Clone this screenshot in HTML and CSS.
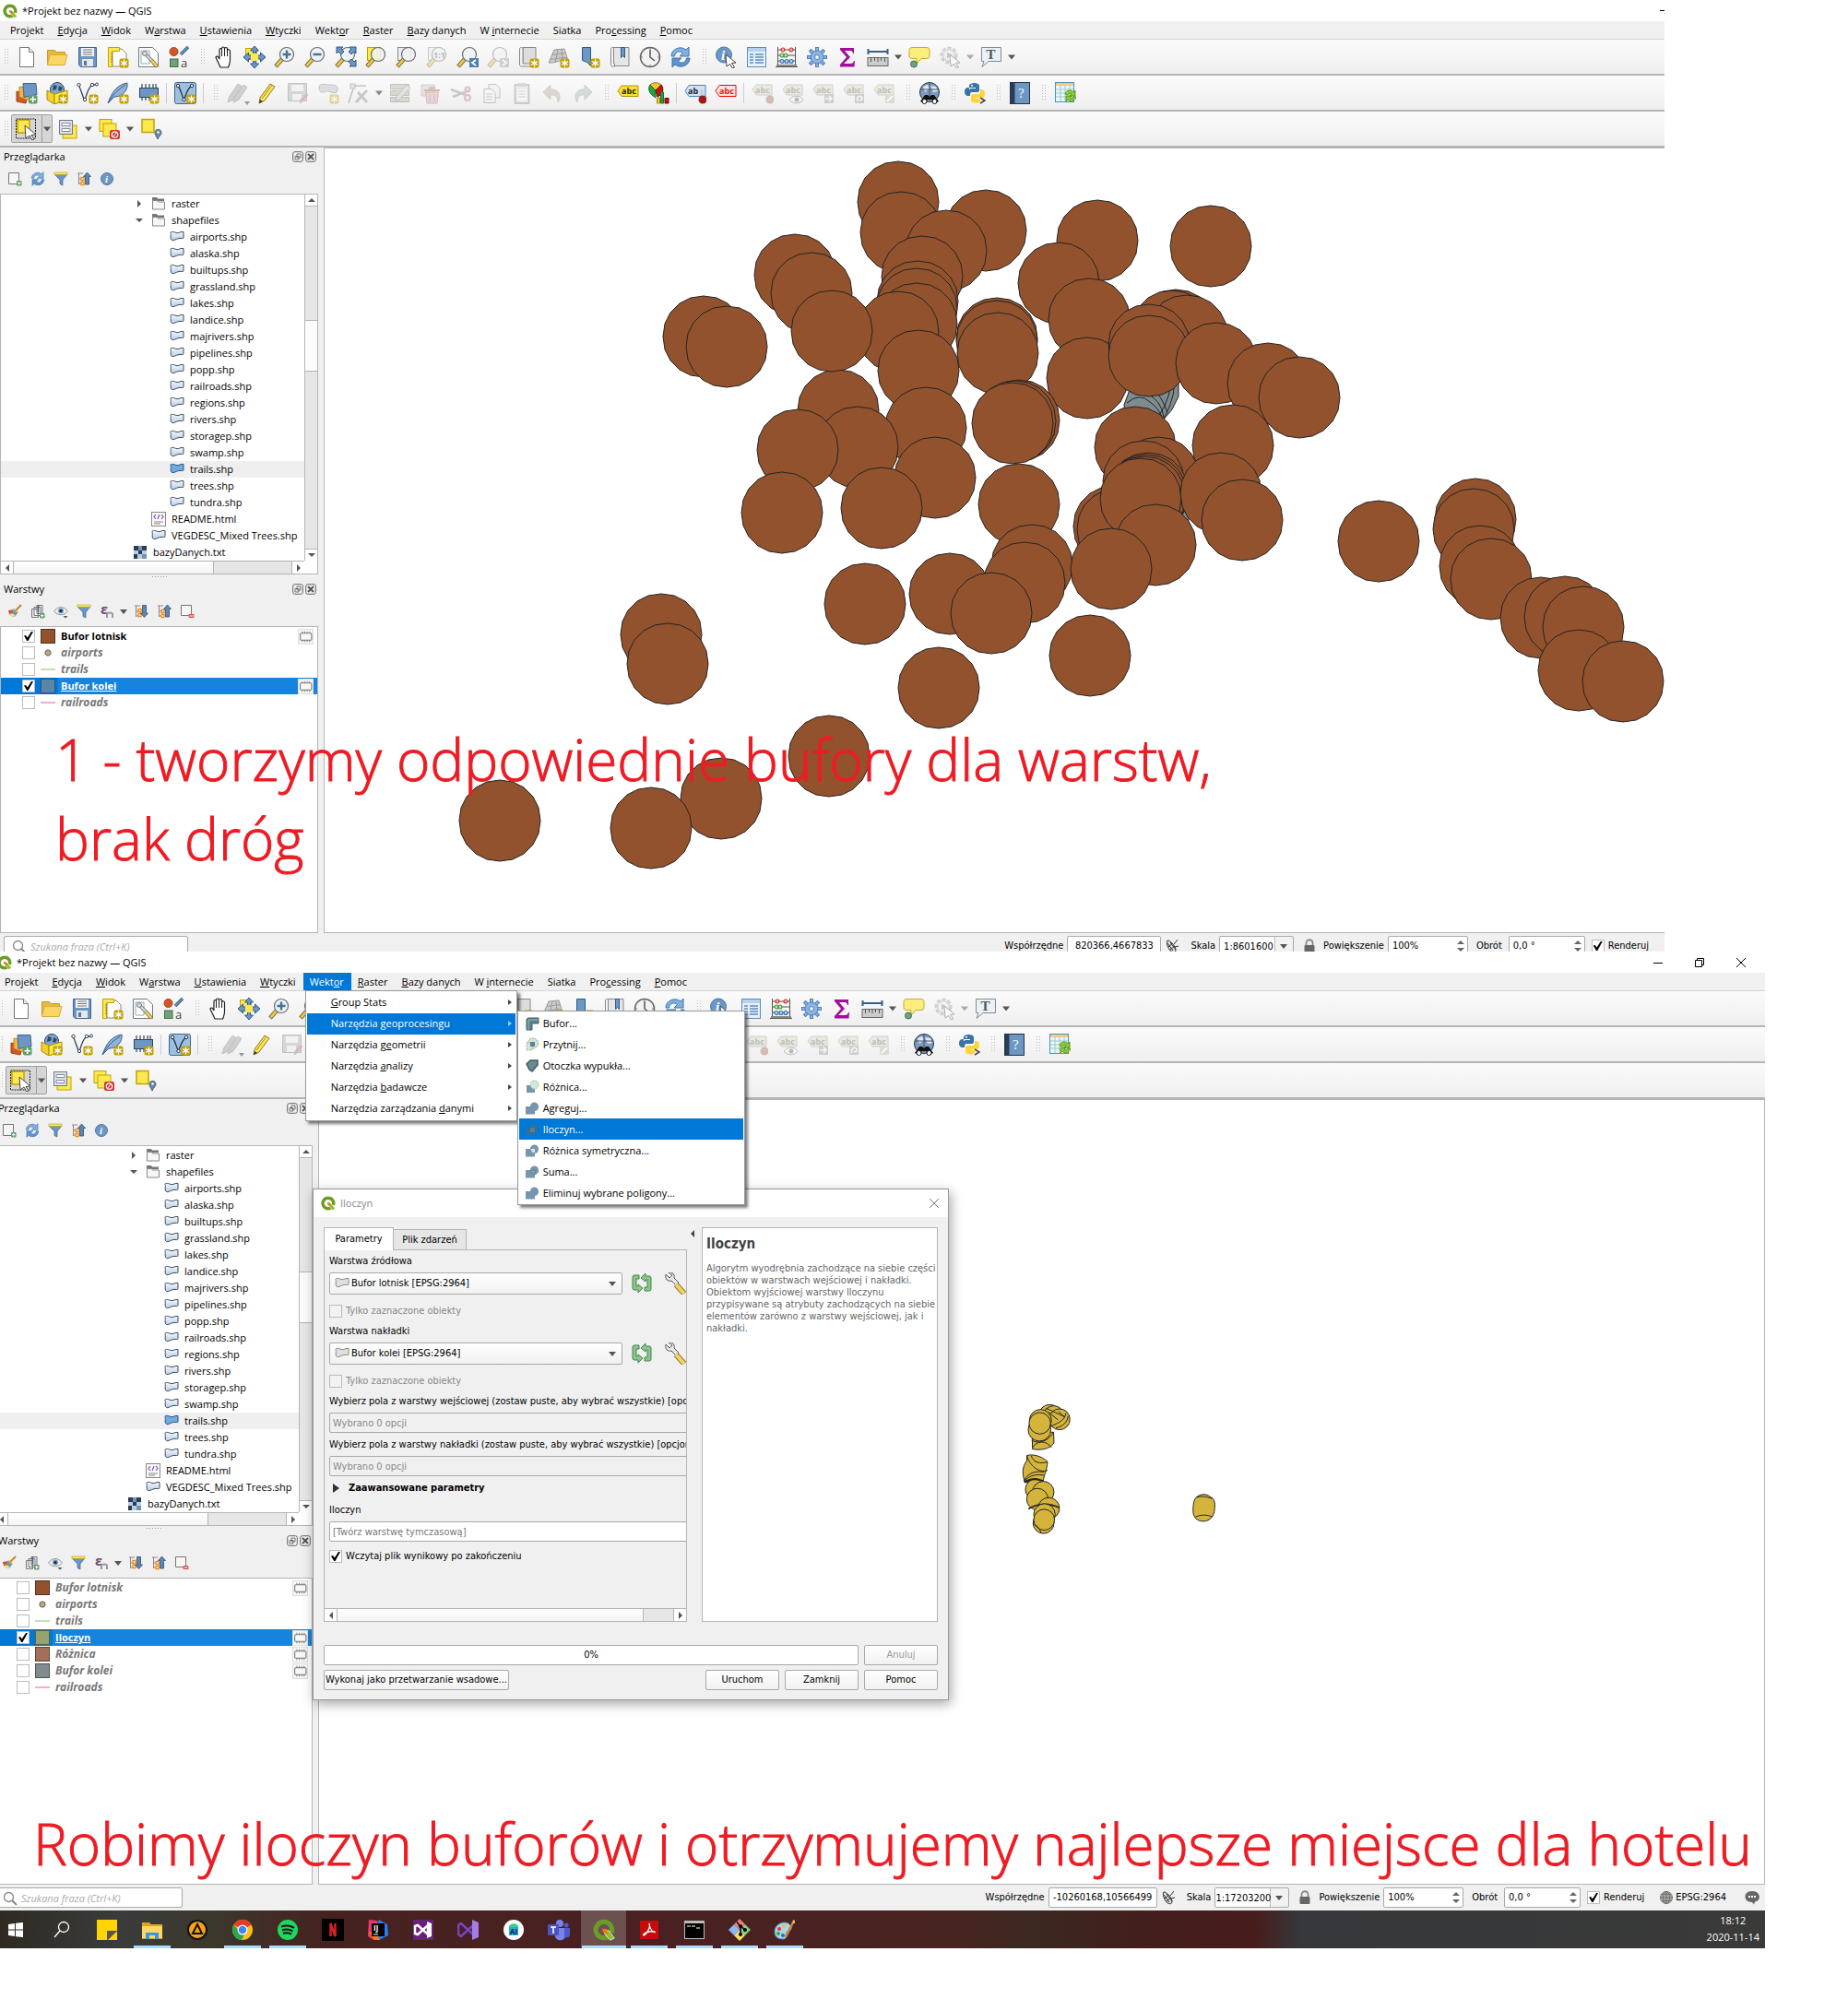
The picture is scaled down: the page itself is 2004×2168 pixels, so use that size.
FILE: index.html
```html
<!DOCTYPE html>
<html lang="pl">
<head>
<meta charset="utf-8">
<title>Projekt bez nazwy — QGIS</title>
<link rel="stylesheet" href="styles.css">
</head>
<body>
<svg class="sprite" aria-hidden="true">
  <linearGradient id="gBlue" x1="0" y1="0" x2="0" y2="1"><stop offset="0" stop-color="#f4f8fc"/><stop offset="1" stop-color="#b9cde4"/></linearGradient>
  <symbol id="badge" viewBox="0 0 24 24"><rect x="13.500" y="13.500" width="10" height="10" rx="2" fill="#c4a000"/><circle cx="18.500" cy="18.500" r="2" fill="#fff"/><path d="M18.500 14.500v8M15 16.500l7 4M22 16.500l-7 4" stroke="#fff" stroke-width="1.200"/></symbol>
  <symbol id="mag" viewBox="0 0 24 24"><path d="M2 22l7-8" stroke="#555" stroke-width="4.500"/><path d="M2.500 21.500l6.500-7.500" stroke="#f3c63a" stroke-width="2.800"/><circle cx="14" cy="9" r="7.500" fill="#eef2f6" fill-opacity=".85" stroke="#6b6b6b" stroke-width="1.200"/></symbol>
  <symbol id="new" viewBox="0 0 24 24"><path d="M4.500 1.500h10l5 5v16h-15z" fill="#fff" stroke="#777"/><path d="M14.500 1.500v5h5" fill="#eee" stroke="#777"/></symbol>
  <symbol id="open" viewBox="0 0 24 24"><path d="M1.500 4.500h8l2 2h9v13h-19z" fill="#e8b93c" stroke="#c79a2a"/><path d="M4 9.500h19l-3 11H1.500z" fill="#fcd665" stroke="#d9ab3b"/></symbol>
  <symbol id="save" viewBox="0 0 24 24"><path d="M2.500 1.500h19v21h-17l-2-2z" fill="#6c97c4" stroke="#41648c"/><rect x="5" y="2" width="14" height="9" fill="#f4f4f4"/><path d="M7 4h10M7 6.500h10M7 9h10" stroke="#777"/><rect x="6" y="14" width="12" height="8" fill="#e8e8e8"/><rect x="8" y="16" width="3" height="5" fill="#5779a0"/></symbol>
  <symbol id="layout" viewBox="0 0 24 24"><path d="M6 3h10l5 5v14H6z" fill="#fff" stroke="#888"/><path d="M1.500 1.500h12v4h-8v17h-4z" fill="#fce94f" stroke="#c4a000"/><path d="M4 8h2M4 11h2M4 14h2M4 17h2" stroke="#a08000"/><use href="#badge"/></symbol>
  <symbol id="layouts" viewBox="0 0 24 24"><path d="M1.500 1.500h15l6 6v15h-21z" fill="#fff" stroke="#777"/><path d="M4 5h9v14H4z" fill="none" stroke="#8ab"/><path d="M8 8l9 9" stroke="#666" stroke-width="3.500"/><path d="M8 8l8 8" stroke="#ddd" stroke-width="2"/><path d="M15 15l6 7" stroke="#7a6418" stroke-width="4"/><path d="M15 15l6 7" stroke="#f3d46a" stroke-width="2.500"/><circle cx="8" cy="8" r="2.500" fill="#ddd" stroke="#777"/></symbol>
  <symbol id="style" viewBox="0 0 24 24"><circle cx="6.500" cy="6" r="4.500" fill="#d4552a" stroke="#a33e1b"/><path d="M14 9l8-8" stroke="#41648c" stroke-width="3.500"/><path d="M14 9l8-8" stroke="#6c97c4" stroke-width="1.500"/><rect x="2.500" y="14" width="8.500" height="8.500" fill="#6fa27b" stroke="#456f50"/><text x="14" y="23" font-size="13" fill="#444">a</text></symbol>
  <symbol id="pan" viewBox="0 0 24 24"><path d="M8 23C6 18 4 15 3 12c1-2 3-.500 4 2V4c0-2 2.500-2 2.500 0V2.500c0-2 3-2 3 0V3c0-2 3-2 3 0v2c0-2 3-1.500 3 .500V15c0 4-1 5-2 8z" fill="#fff" stroke="#222" stroke-width="1.200"/><path d="M9.500 4v7M12.500 3v8M15.500 4v7" stroke="#222"/></symbol>
  <symbol id="pansel" viewBox="0 0 24 24"><rect x="2.500" y="2.500" width="12" height="12" fill="#fce94f" stroke="#c4a000"/><path d="M12 0l4.500 5h-3v5h5v-3L24 12l-5.500 5v-3h-5v5h3L12 24l-4.500-5h3v-5h-5v3L0 12l5.500-5v3h5V5h-3z" fill="#6c97c4" stroke="#2f5a87"/><rect x="8" y="8" width="8" height="8" fill="#fce94f"/></symbol>
  <symbol id="zin" viewBox="0 0 24 24"><use href="#mag"/><path d="M14 4.500v9M9.500 9h9" stroke="#41739f" stroke-width="2.500"/></symbol>
  <symbol id="zout" viewBox="0 0 24 24"><use href="#mag"/><path d="M9.500 9h9" stroke="#41739f" stroke-width="2.500"/></symbol>
  <symbol id="zfull" viewBox="0 0 24 24"><use href="#mag"/><path d="M2 1h7l-2 2 3 3-3 3-3-3-2 2zM23 1v7l-2-2-3 3-3-3 3-3-2-2zM23 22h-7l2-2-3-3 3-3 3 3 2-2z" fill="#6c97c4" stroke="#2f5a87"/></symbol>
  <symbol id="zsel" viewBox="0 0 24 24"><rect x="2.500" y="1.500" width="14" height="14" fill="#fce94f" stroke="#c4a000"/><use href="#mag"/></symbol>
  <symbol id="zlay" viewBox="0 0 24 24"><rect x="2.500" y="1.500" width="14" height="14" fill="#eee" stroke="#888"/><use href="#mag"/></symbol>
  <symbol id="znat" viewBox="0 0 24 24"><rect x="2.500" y="1.500" width="14" height="14" fill="#eee" stroke="#888"/><use href="#mag"/><text x="8" y="12.500" font-size="9" font-weight="bold" fill="#555">1:1</text></symbol>
  <symbol id="zprev" viewBox="0 0 24 24"><use href="#mag"/><rect x="14" y="13" width="10" height="10" fill="#4d7fb3"/><path d="M21 15l-4 3 4 3" fill="none" stroke="#fff" stroke-width="1.800"/></symbol>
  <symbol id="znext" viewBox="0 0 24 24"><use href="#mag"/><rect x="14" y="13" width="10" height="10" fill="#999"/><path d="M17 15l4 3-4 3" fill="none" stroke="#fff" stroke-width="1.800"/></symbol>
  <symbol id="mapview" viewBox="0 0 24 24"><path d="M6 1.500h14v18H6z" fill="#ddd" stroke="#888"/><path d="M2.500 3c0-2 3.500-2 3.500 0v16h13v3H4.500c-1 0-2-1-2-2z" fill="#f3f3f3" stroke="#888"/><use href="#badge"/></symbol>
  <symbol id="map3d" viewBox="0 0 24 24"><path d="M7 4l11-1 4 13c-7-3-13 3-21 2z" fill="#ccc" stroke="#999"/><path d="M5 9c5 1 10-2 15-1M3 14c6 1 12-3 18-1M11 4L8 18M15 4l1 11" stroke="#999" fill="none"/><use href="#badge"/></symbol>
  <symbol id="bmnew" viewBox="0 0 24 24"><path d="M4.500 1.500h9v20l-4-4-5 -2z" fill="#6c97c4" stroke="#2f5a87"/><use href="#badge"/></symbol>
  <symbol id="bm" viewBox="0 0 24 24"><path d="M5 1.500h17v20H5z" fill="#e6e6e6" stroke="#888"/><path d="M2.500 3c0-2 3-2 3 0v16h1v3H4c-1 0-1.500-1-1.500-2z" fill="#f6f6f6" stroke="#888"/><path d="M13.500 1.500h4v11l-2-2-2 2z" fill="#6c97c4" stroke="#2f5a87"/></symbol>
  <symbol id="clock" viewBox="0 0 24 24"><circle cx="12" cy="12" r="10.500" fill="#f2f2f2" stroke="#666" stroke-width="1.500"/><path d="M12 4v8l5 4" fill="none" stroke="#555" stroke-width="1.500"/><path d="M12 2v2M12 20v2M2 12h2M20 12h2" stroke="#777"/></symbol>
  <symbol id="refresh" viewBox="0 0 24 24"><path d="M2 11C2 3 12-1 18 4l3-3v10H11l3.500-3.500C10 4 6 7 5.500 11z" fill="#7fb0e0" stroke="#3f74ad"/><path d="M22 13c0 8-10 12-16 7l-3 3V13h10l-3.500 3.500C14 20 18 17 18.500 13z" fill="#5d94cf" stroke="#3f74ad"/></symbol>
  <symbol id="cursor" viewBox="0 0 24 24"><path d="M12 9l11 9-4.500.500 3 4.500-2 1-3-4.500L13 22z" fill="#fff" stroke="#444"/></symbol>
  <symbol id="ident" viewBox="0 0 24 24"><circle cx="10" cy="9.500" r="8.500" fill="#6c97c4" stroke="#4a78a8"/><text x="7" y="15" font-size="15" font-style="italic" font-weight="bold" font-family="Liberation Serif,serif" fill="#fff">i</text><use href="#cursor"/></symbol>
  <symbol id="table" viewBox="0 0 24 24"><rect x="2.500" y="1.500" width="20" height="21" fill="#e6f1fb" stroke="#5d8cba"/><rect x="3" y="2" width="19" height="4" fill="#b5d3ee"/><path d="M5 9h4M5 12h4M5 15h4M5 18h4M11 9h9M11 12h9M11 15h9M11 18h9" stroke="#5d8cba" stroke-width="1.300"/></symbol>
  <symbol id="abacus" viewBox="0 0 24 24"><path d="M2.500 1v20M21.500 1v20M0 22.500h24M2 4h20M2 10h20M2 16h20" stroke="#555" fill="none"/><path d="M1 21h22" stroke="#888" stroke-width="2"/><g stroke-width="1.200"><g fill="#f6b3b3" stroke="#c33"><circle cx="8" cy="4" r="2"/><circle cx="17" cy="4" r="2"/></g><g fill="#b9e5b0" stroke="#4a9a3f"><circle cx="7" cy="10" r="2"/><circle cx="11" cy="10" r="2"/></g><g fill="#b5d3ee" stroke="#3f74ad"><circle cx="7" cy="16.500" r="2"/><circle cx="12" cy="16.500" r="2"/><circle cx="17" cy="16.500" r="2"/></g></g></symbol>
  <symbol id="gear" viewBox="0 0 24 24"><path d="M12 1v22M1 12h22M4.200 4.200l15.600 15.600M19.800 4.200L4.200 19.800" stroke="#4d80bd" stroke-width="4"/><path d="M12 2v20M2 12h20M5 5l14 14M19 5L5 19" stroke="#8db4e2" stroke-width="2"/><circle cx="12" cy="12" r="7" fill="#8db4e2" stroke="#4d80bd"/><circle cx="12" cy="12" r="2.500" fill="#f4f4f4" stroke="#4d80bd"/></symbol>
  <symbol id="sigma" viewBox="0 0 24 24"><path d="M4 2h15v6h-1c-.500-2.500-1.500-3-4-3H9l6 7-7 7h7c2.500 0 3.500-1 4-3h1l-.500 6.500H4V20l7-8-7-8z" fill="#a0109b"/></symbol>
  <symbol id="ruler" viewBox="0 0 24 24"><path d="M1 6h22M1.500 3v6M22.500 3v6" stroke="#3b5f86" stroke-width="2"/><rect x="1" y="12.500" width="22" height="9" fill="#ccc" stroke="#666"/><path d="M4.500 13v4M8.500 13v3M12 13v4M15.500 13v3M19.500 13v4" stroke="#555"/></symbol>
  <symbol id="tip" viewBox="0 0 24 24"><path d="M5 1.500h14c3 0 4 1 4 3v6c0 2-1 3-4 3h-5L9 19v-5.500H5c-3 0-4-1-4-3v-6c0-2 1-3 4-3z" fill="#fcee7c" stroke="#c4a83a"/><circle cx="6" cy="19.500" r="3.500" fill="#6fa27b" stroke="#456f50"/></symbol>
  <symbol id="action" viewBox="0 0 24 24"><circle cx="11" cy="10" r="8" fill="#ddd" stroke="#999" stroke-width="3" stroke-dasharray="4 2"/><circle cx="11" cy="10" r="6" fill="#eee" stroke="#999"/><path d="M9 6.500v7l6-3.500z" fill="#888"/><use href="#cursor"/></symbol>
  <symbol id="textann" viewBox="0 0 24 24"><path d="M1.500 1.500h21v15H9l-7 6 2-6H1.500z" fill="#e9f2f6" stroke="#889"/><text x="6.500" y="14" font-size="15" font-family="Liberation Serif,serif" font-weight="bold" fill="#555">T</text></symbol>
  <symbol id="dsm" viewBox="0 0 24 24"><path d="M1 10l12 3-2 10-10-2z" fill="#d4552a" stroke="#a33e1b"/><path d="M4 5l12 2-2 13-10-4z" fill="#f3b53a" stroke="#c48a1b"/><path d="M8 1.500l14 0 1 12-14 3z" fill="#6c97c4" stroke="#41648c"/><rect x="14" y="14" width="9.500" height="9.500" rx="2" fill="#5e9e6e"/><path d="M18.700 15.500v6.500M15.500 18.700H22" stroke="#fff" stroke-width="1.600"/></symbol>
  <symbol id="geopkg" viewBox="0 0 24 24"><circle cx="12" cy="8" r="7.500" fill="#7ea8d4" stroke="#345"/><path d="M8 3l4 1-1 4-4 1zM14 4l4 2-2 4-3-1z" fill="#2c4a6c"/><path d="M1 9l8 4v11l-8-5z" fill="#f3d12a" stroke="#a88a10"/><path d="M9 13l14-4v10L9 24z" fill="#fcea3f" stroke="#a88a10"/><use href="#badge"/></symbol>
  <symbol id="shp" viewBox="0 0 24 24"><path d="M2 3c3 5 4 12 7 17 2-7 3-13 8-17h4" fill="none" stroke="#345" stroke-width="1.300"/><g fill="#fff" stroke="#345"><circle cx="2.500" cy="3" r="1.700"/><circle cx="9" cy="19" r="1.700"/><circle cx="17" cy="3" r="1.700"/><circle cx="22" cy="2.500" r="1.500"/></g><use href="#badge"/></symbol>
  <symbol id="feather" viewBox="0 0 24 24"><path d="M1 23C5 12 10 3 22 1c1 7-4 15-14 15z" fill="#8fb4da" stroke="#3b5f86"/><path d="M1 23C6 14 12 8 20 3" fill="none" stroke="#3b5f86"/><use href="#badge"/></symbol>
  <symbol id="chip" viewBox="0 0 24 24"><path d="M5 2v18M9 2v18M13 2v18M17 2v18M20 2v18" stroke="#345" stroke-width="1.200"/><rect x="2.500" y="6.500" width="20" height="10" fill="#6c97c4" stroke="#345"/><use href="#badge"/></symbol>
  <symbol id="virt" viewBox="0 0 24 24"><rect x=".500" y=".500" width="23" height="23" rx="2" fill="#9dbfe0" stroke="#41648c"/><path d="M4 4c3 4 4 10 6.500 15C13 13 14 7 19 4" fill="none" stroke="#234" stroke-width="1.300"/><g fill="#fff" stroke="#234"><circle cx="4" cy="4" r="1.700"/><circle cx="10.500" cy="19" r="1.700"/><circle cx="19" cy="4" r="1.700"/></g><use href="#badge"/></symbol>
  <symbol id="pencil" viewBox="0 0 24 24"><path d="M3 23l1-6L15 2l5 3L9 20z" fill="#f7e356" stroke="#8d7d2a"/><path d="M3 23l1-4 3 2z" fill="#333"/><path d="M6 18L17 3" stroke="#a8942a"/></symbol>
  <symbol id="pencils" viewBox="0 0 24 24"><path d="M2 22l1.500-6L13 2l4 2.500L8 19zM8 22l1.500-6L19 3l4 2.500L14 19z" fill="#999" stroke="#777"/></symbol>
  <symbol id="saveed" viewBox="0 0 24 24"><path d="M1.500 1.500h20v19h-20z" fill="#aaa" stroke="#777"/><rect x="5" y="3" width="13" height="7" fill="#eee"/><rect x="6" y="13" width="10" height="7" fill="#eee"/><path d="M14 23l1-4 6-7 2 2-6 7z" fill="#b58" stroke="#888"/></symbol>
  <symbol id="addf" viewBox="0 0 24 24"><path d="M2 6c0-6 8-3 12-3s9 0 8 6-9 0-12 1-8 3-8-4z" fill="#bbb" stroke="#777"/><use href="#badge"/></symbol>
  <symbol id="vertex" viewBox="0 0 24 24"><path d="M1 23C4 14 5 9 7 5M4 4h16" stroke="#777" fill="none" stroke-width="1.500"/><rect x="3" y="2" width="5" height="5" fill="#ccc" stroke="#777"/><path d="M11 11l10 11M21 9L9 22" stroke="#888" stroke-width="3"/></symbol>
  <symbol id="modattr" viewBox="0 0 24 24"><path d="M1.500 2.500h20v5h-20zM1.500 9.500h20v5h-20zM1.500 16.500h20v5h-20z" fill="#aab98a" stroke="#777"/><path d="M7 21l1-5L19 3l4 3-12 13z" fill="#ccc" stroke="#777"/></symbol>
  <symbol id="trash" viewBox="0 0 24 24"><path d="M2 3h14v12H2z" fill="#ccb" stroke="#999"/><path d="M5 9h17M10 6.500h7" stroke="#a55" stroke-width="2"/><path d="M6.500 11h14l-1.500 12h-11z" fill="#d9a9a9" stroke="#a66"/><path d="M11 13v8M16 13v8" stroke="#a66"/></symbol>
  <symbol id="cut" viewBox="0 0 24 24"><path d="M1 8l16 6M3 16l18-7" stroke="#888" stroke-width="2.500"/><circle cx="19" cy="17" r="3" fill="none" stroke="#b77" stroke-width="2"/><circle cx="19" cy="8" r="2.500" fill="none" stroke="#b77" stroke-width="2"/></symbol>
  <symbol id="copy" viewBox="0 0 24 24"><path d="M9 2.500h8l4 4V17H9z" fill="#eee" stroke="#777"/><path d="M4 7.500h8l4 4v11H4z" fill="#f6f6f6" stroke="#777"/><path d="M6 13h7M6 16h7M6 19h7" stroke="#888"/></symbol>
  <symbol id="paste" viewBox="0 0 24 24"><rect x="4.500" y="3" width="15" height="20" fill="#ddd" stroke="#777" stroke-width="1.500"/><rect x="8" y="1" width="8" height="4" fill="#aaa"/><path d="M7 8h10v12H7z" fill="#fff"/><path d="M8 10h8M8 13h8M8 16h8" stroke="#999"/></symbol>
  <symbol id="undo" viewBox="0 0 24 24"><path d="M10 3v5c8-1 13 6 8 14 0-6-3-9-8-8v5L2 11z" fill="#b9a79a" stroke="#998"/></symbol>
  <symbol id="redo" viewBox="0 0 24 24"><path d="M14 3v5C6 7 1 14 6 22c0-6 3-9 8-8v5l8-8z" fill="#aab5aa" stroke="#899"/></symbol>
  <symbol id="abcy" viewBox="0 0 24 24"><path d="M1 9.500l4-5.500h18v11.500H5z" fill="#fce02f" stroke="#b8900c"/><text x="5" y="13" font-size="9" font-weight="bold" fill="#222">abc</text></symbol>
  <symbol id="pie" viewBox="0 0 24 24"><path d="M9 9L3 3c3-3 9-3 12 0z" fill="#f7c81c" stroke="#865"/><path d="M9 9L3 3C0 7 2 13 9 17z" fill="#1fa636" stroke="#264"/><path d="M9 9l6-6c4 5 1 11-4 13z" fill="#c0170f" stroke="#600"/><path d="M10.500 17h3v6h-3z" fill="#f7c81c" stroke="#a80"/><path d="M14.500 11h3v12h-3z" fill="#1fa636" stroke="#264"/><path d="M19 17.500h4V23h-4z" fill="#c0170f" stroke="#600"/></symbol>
  <symbol id="abcb" viewBox="0 0 24 24"><path d="M1 9.500l4-6h18v12H5z" fill="#cfe2f7" stroke="#3f86d0"/><text x="4" y="13" font-size="9" font-weight="bold" fill="#222">ab</text><path d="M19 8v9" stroke="#ccc" stroke-width="3"/><circle cx="20" cy="19" r="4.500" fill="#a01818"/></symbol>
  <symbol id="abcr" viewBox="0 0 24 24"><path d="M1 9.500l4-6h18v12H5z" fill="#fde3e3" stroke="#f00"/><text x="5" y="13" font-size="9" font-weight="bold" fill="#e11">abc</text></symbol>
  <symbol id="lab1" viewBox="0 0 24 24"><path d="M1 8l4-5h17v11H5z" fill="#ddd9b8" stroke="#999"/><text x="4" y="12" font-size="9" font-weight="bold" fill="#666">abc</text></symbol>
  <symbol id="lpin" viewBox="0 0 24 24"><use href="#lab1"/><circle cx="20" cy="19" r="4.500" fill="#a66"/></symbol>
  <symbol id="leye" viewBox="0 0 24 24"><use href="#lab1"/><path d="M8 19c4-5 12-5 15 0-3 5-11 5-15 0z" fill="#fff" stroke="#666"/><circle cx="16" cy="19" r="2.500" fill="#666"/></symbol>
  <symbol id="lmove" viewBox="0 0 24 24"><use href="#lab1"/><rect x="13" y="13" width="10" height="10" fill="#999"/><path d="M14 18h6M18 15l3 3-3 3" stroke="#fff" fill="none" stroke-width="1.500"/></symbol>
  <symbol id="lrot" viewBox="0 0 24 24"><use href="#lab1"/><rect x="13" y="13" width="10" height="10" fill="#999"/><path d="M16 21c-2-6 5-8 5-3 0 2-2 2-3 1" stroke="#fff" fill="none" stroke-width="1.500"/></symbol>
  <symbol id="ledit" viewBox="0 0 24 24"><use href="#lab1"/><rect x="13" y="13" width="10" height="10" fill="#bba"/><path d="M15 21l6-6" stroke="#fff" stroke-width="2"/></symbol>
  <symbol id="globe" viewBox="0 0 24 24"><circle cx="12" cy="11" r="10.500" fill="#7d9cc0" stroke="#234"/><path d="M5 5l5-2 2 4-5 4zM13 4l6 1 2 5-5 1z" fill="#dfe8f2"/><path d="M12 1v19M2 8h20" stroke="#456"/><path d="M7 14h3l2 2 2-2h3l5 7-4 2-4-4h-4l-4 4-4-2z" fill="#111"/><circle cx="6.500" cy="21" r="2.500" fill="#fff" stroke="#111"/><circle cx="17.500" cy="21" r="2.500" fill="#fff" stroke="#111"/></symbol>
  <symbol id="python" viewBox="0 0 24 24"><path d="M6 12V9c0-1 1-2 2-2h5V6H6V4c0-4 11-4 11 0v5c0 1-1 2-2 2H9c-2 0-2 2-2 4H4c-4 0-4-9 0-9h2" fill="#3775a9"/><circle cx="9" cy="3.800" r="1" fill="#fff"/><path d="M18 8h2c4 0 4 9 0 9h-7v1h5v2c0 4-10 3-10 0v-5c0-1 1-2 2-2h6c2 0 2-2 2-5z" fill="#ffd43b"/><path d="M18 17l5 3-5 3" fill="none" stroke="#444" stroke-width="1.500"/></symbol>
  <symbol id="help" viewBox="0 0 24 24"><rect x="1.500" y=".500" width="21" height="23" fill="#6c97c4" stroke="#234"/><rect x="1.500" y=".500" width="5" height="23" fill="#2b3d52"/><text x="10" y="17" font-size="15" font-family="Liberation Serif,serif" fill="#fff">?</text></symbol>
  <symbol id="plug" viewBox="0 0 24 24"><rect x="1.500" y=".500" width="20" height="21" fill="#eaf5fb" stroke="#4b93b8"/><path d="M2 2.500h19" stroke="#f2c98a" stroke-width="3"/><path d="M2 8h19M2 12h19M2 16h19M7 4v17M12 4v17M17 4v17" stroke="#9cc"/><path d="M12 13c1-5 7-5 9-2l2-2v6h-6l2-2c-1-1-3-1-4 1zM24 16c-1 5-7 6-9 3l-2 2v-6h6l-2 2c1 1 3 1 4-1z" fill="#8ccc2c" stroke="#4a8a08" stroke-width=".800"/></symbol>
  <symbol id="select" viewBox="0 0 24 24"><rect x="2" y="2" width="13" height="14" fill="#fce94f" stroke="#c4a000" stroke-width="1.500"/><rect x=".500" y="1" width="21" height="21" fill="none" stroke="#222" stroke-dasharray="2 1"/><path d="M10 8l12 10-5 .500 3 4.500-2 1-3-5-4 3z" fill="#fff" stroke="#444"/></symbol>
  <symbol id="selform" viewBox="0 0 24 24"><rect x="6" y="8" width="15" height="14" fill="#fce94f" stroke="#c4a000"/><rect x="2.500" y="2.500" width="14" height="15" fill="#dde3ea" stroke="#778"/><path d="M5 5.500h9v3H5zM5 11.500h9v3H5z" fill="#fff" stroke="#889"/></symbol>
  <symbol id="desel" viewBox="0 0 24 24"><rect x="1" y="1.500" width="13" height="13" fill="#fce94f" stroke="#c4a000"/><rect x="5" y="6" width="14" height="14" fill="#fce94f" stroke="#c4a000"/><rect x="12" y="13" width="11" height="10" rx="2" fill="#d93636"/><circle cx="17.500" cy="18" r="3.200" fill="none" stroke="#fff" stroke-width="1.200"/><path d="M15.500 20.500l4-5" stroke="#fff"/></symbol>
  <symbol id="selloc" viewBox="0 0 24 24"><rect x="2" y="1.500" width="13" height="14" fill="#fce94f" stroke="#c4a000" stroke-width="1.500"/><path d="M19 23c-2-4-3-5-3-7 0-5 7-5 7 0 0 2-2 3-4 7z" fill="#6587a5" stroke="#567"/><circle cx="19.500" cy="15.500" r="1.300" fill="#fff"/></symbol>

  <symbol id="qgis" viewBox="0 0 16 16"><path d="M8 2.200a5.800 5.800 0 1 0 4 9.900M13.400 10A5.800 5.800 0 0 0 8 2.200" fill="none" stroke="#6c9c28" stroke-width="3.400"/><path d="M8.500 8l3 .500 4 5.500-3 1.500-4-4.500z" fill="#8fbf2f" stroke="#fff" stroke-width=".500"/><path d="M7 7l3 .500 1 2.500-2 .800-2-1.800z" fill="#ee7913"/></symbol>
  <symbol id="float" viewBox="0 0 12 12"><rect x=".700" y=".700" width="10.600" height="10.600" rx="2" fill="none" stroke="#666"/><path d="M5 3h4v4H5zM3 5.500h4V9H3z" fill="#f0f0f0" stroke="#666" stroke-width=".900"/></symbol>
  <symbol id="closep" viewBox="0 0 12 12"><rect x=".700" y=".700" width="10.600" height="10.600" rx="2" fill="none" stroke="#666"/><path d="M3 3l6 6M9 3L3 9" stroke="#555" stroke-width="2"/></symbol>
  <symbol id="paddl" viewBox="0 0 16 16"><path d="M1.500 1.500h11v12h-11z" fill="#f6f6f6" stroke="#777"/><rect x="10" y="10" width="5.500" height="5.500" rx="1" fill="#5e9e6e"/><path d="M12.700 11v3.500M11 12.700h3.500" stroke="#fff"/></symbol>
  <symbol id="filter" viewBox="0 0 16 16"><path d="M1 3h14l-5 6v6l-3-1.500V9z" fill="#6c97c4" stroke="#41648c" stroke-width=".700"/><rect x="1" y="1" width="14" height="2.500" fill="#fce94f" stroke="#b5a020" stroke-width=".600"/></symbol>
  <symbol id="collapse" viewBox="0 0 16 16"><path d="M1 2h6M2.500 2v12M2.500 8h3M2.500 13h3" stroke="#888" fill="none"/><path d="M5 6.500h3v3H5zM5 11.500h3v3H5z" fill="#fff" stroke="#f08c1a" stroke-width="1.300"/><path d="M11.500 1l4 4.500h-2V14h-4V5.500h-2z" fill="#5b86b5" stroke="#2f4f73" stroke-width=".800"/></symbol>
  <symbol id="expand" viewBox="0 0 16 16"><path d="M1 2h6M2.500 2v12M2.500 8h3M2.500 13h3" stroke="#888" fill="none"/><path d="M5 5.500h3v3H5zM5 10.500h3v3H5z" fill="#fff" stroke="#f08c1a" stroke-width="1.300"/><path d="M11.500 14.500l4-4.500h-2V1.500h-4V10h-2z" fill="#5b86b5" stroke="#2f4f73" stroke-width=".800"/></symbol>
  <symbol id="info" viewBox="0 0 16 16"><circle cx="8" cy="8" r="6.500" fill="#6c97c4" stroke="#4a78a8"/><text x="6" y="12" font-size="11" font-style="italic" font-weight="bold" font-family="Liberation Serif,serif" fill="#fff">i</text></symbol>
  <symbol id="brush" viewBox="0 0 16 16"><path d="M9 7l6-6" stroke="#c8882a" stroke-width="2.200"/><path d="M7 5l5 4-2 2-5-4z" fill="#d8a33c"/><path d="M1 7l5-1 5 4-3 4-4-1z" fill="#6c97c4"/><path d="M1 7l4 0 1 6-4-2z" fill="#e0483c"/><path d="M3 10l4 1 2 3-5-1z" fill="#fce94f"/></symbol>
  <symbol id="addgrp" viewBox="0 0 16 16"><path d="M1.500 5.500h7v9h-7zM4 3.500h7v9H4zM7 1.500h6v9H7z" fill="#eee" stroke="#777"/><path d="M8.500 1v8" stroke="#41648c" stroke-width="1.500"/><rect x="10" y="10" width="5.500" height="5.500" rx="1" fill="#5e9e6e"/><path d="M12.700 11v3.500M11 12.700h3.500" stroke="#fff"/></symbol>
  <symbol id="eye" viewBox="0 0 16 16"><path d="M.500 8c4-6 11-6 15 0-4 5-11 5-15 0z" fill="#eee" stroke="#999"/><circle cx="8" cy="7.500" r="3" fill="#6c97c4"/><circle cx="8" cy="7.500" r="1.500" fill="#123"/><path d="M10.500 13h5l-2.500 2.500z" fill="#555"/></symbol>
  <symbol id="expr" viewBox="0 0 16 16"><text x="1" y="11" font-size="15" font-weight="bold" fill="#6b4a73">ε</text><path d="M8 15v-4c0-2 6-2 6 0v4" fill="none" stroke="#999" stroke-width="2"/></symbol>
  <symbol id="remove" viewBox="0 0 16 16"><path d="M1.500 1.500h11v11h-11z" fill="#f6f6f6" stroke="#777"/><rect x="9.500" y="11" width="6" height="4" rx="1" fill="#e84a4a"/><path d="M10.500 13h4" stroke="#fff"/></symbol>
  <symbol id="folder" viewBox="0 0 16 16"><path d="M1 1h5l1 1.500h7V5H1z" fill="#777"/><path d="M1.500 4.500h5l1 1.500h7v8h-13z" fill="#f6f6f6" stroke="#888"/></symbol>
  <symbol id="poly" viewBox="0 0 16 16"><path d="M1 3.500c0-2 4-1 6 0 3 1 5-2 8-1v6c0 2-2 .500-5 1S4 12.500 2.500 11.500C0 10 2 6 1 3.500z" fill="url(#gBlue)" stroke="#3c4c60"/></symbol>
  <symbol id="polyh" viewBox="0 0 16 16"><path d="M1 3.500c0-2 4-1 6 0 3 1 5-2 8-1v6c0 2-2 .500-5 1S4 12.500 2.500 11.500C0 10 2 6 1 3.500z" fill="#6fabe0" stroke="#2d5580"/></symbol>
  <symbol id="polyg" viewBox="0 0 16 16"><path d="M1 3.500c0-2 4-1 6 0 3 1 5-2 8-1v6c0 2-2 .500-5 1S4 12.500 2.500 11.500C0 10 2 6 1 3.500z" fill="#e0e0e0" stroke="#888"/></symbol>
  <symbol id="html" viewBox="0 0 16 16"><rect x=".500" y=".500" width="15" height="15" fill="#fafafa" stroke="#888"/><path d="M5 3L3 5.500 5 8M11 3l2 2.500L11 8M9 3L7 8" stroke="#8a4fc0" stroke-width="1.200" fill="none"/><path d="M3 11h10M3 13h7" stroke="#888"/></symbol>
  <symbol id="raster" viewBox="0 0 16 16"><rect x="1" y="1" width="14" height="14" fill="#b9cde4"/><path d="M1 1h5v5H1zM10 1h5v5h-5zM6 6h4v4H6zM1 10h4v5H1z" fill="#2b3d52"/><path d="M6 1h4v5H6zM10 10h5v5h-5z" fill="#7393b5"/></symbol>
  <symbol id="mem" viewBox="0 0 16 16"><rect x=".500" y=".500" width="15" height="15" fill="#f8f8f8" stroke="#ddd"/><path d="M4.500 2.500v11M7 2.500v11M9.500 2.500v11M12 2.500v11" stroke="#888"/><rect x="2.500" y="4.500" width="11.500" height="7" rx="1" fill="#f8f8f8" stroke="#777"/></symbol>
  <symbol id="search" viewBox="0 0 16 16"><circle cx="6.500" cy="6.500" r="5" fill="none" stroke="#888" stroke-width="1.300"/><path d="M10 10l5 5" stroke="#888" stroke-width="2"/></symbol>
  <symbol id="mouse" viewBox="0 0 16 16"><path d="M3 2c2-1 9 6 9 10s-4 3-6 1-5-9-3-11z" fill="#ddd" stroke="#333"/><path d="M3 5l6 8M6 4l6 8M4 9l5-4M6 12l5-4M14 1l-4 5M15 8l-4 1" stroke="#333"/></symbol>
  <symbol id="lock" viewBox="0 0 16 16"><path d="M4.500 8V5c0-5 7-5 7 0v3" fill="none" stroke="#888" stroke-width="1.800"/><rect x="2.500" y="7" width="11" height="8" rx="1" fill="#666"/></symbol>
  <symbol id="crs" viewBox="0 0 16 16"><circle cx="8" cy="8" r="6.500" fill="#aaa" stroke="#777"/><path d="M8 1v14M1 8h14M2.500 4.500h11M2.500 11.500h11M8 1C3 4 3 12 8 15M8 1c5 3 5 11 0 14" stroke="#666" fill="none" stroke-width=".800"/></symbol>
  <symbol id="bubble" viewBox="0 0 16 16"><path d="M8 1c10 0 10 11 3 11.500L10 15.500 8 13C-2 13-2 1 8 1z" fill="#666"/><path d="M4 7h2M7 7h2M10 7h2" stroke="#fff" stroke-width="1.800"/></symbol>

  <symbol id="gBuf" viewBox="0 0 16 16"><path d="M2 15V4c0-1 1-2 2-2h11v6H8v7z" fill="#5c7f92" stroke="#43606f"/><path d="M4 15V4h11" fill="none" stroke="#9fc0a8"/></symbol>
  <symbol id="gClip" viewBox="0 0 16 16"><circle cx="9" cy="6.500" r="5.500" fill="#d5e6d2" stroke="#7fa37b" stroke-dasharray="2 1"/><path d="M2 6h6v8H2z" fill="#d5e6d2" stroke="#9b9" stroke-dasharray="2 1"/><path d="M6 5h5v5H6z" fill="#5c7fa2"/></symbol>
  <symbol id="gHull" viewBox="0 0 16 16"><path d="M2 6l4-4h8v5l-6 7-3-2z" fill="#6a8a8c" stroke="#3f5c66" stroke-width="1.500"/></symbol>
  <symbol id="gDiff" viewBox="0 0 16 16"><path d="M2 6h9v8H2z" fill="#7795ae"/><circle cx="10.500" cy="5.500" r="4.500" fill="#d5e6d2" stroke="#9bbf97" stroke-dasharray="2 1"/></symbol>
  <symbol id="gDis" viewBox="0 0 16 16"><path d="M1 6h5c0-6 9-6 9 0 0 3-1 4.500-4 5v3.500H1z" fill="#7795ae"/></symbol>
  <symbol id="gInt" viewBox="0 0 16 16"><path d="M1 6h5c0-6 9-6 9 0 0 3-1 4.500-4 5v3.500H1z" fill="#2a6fa8"/><path d="M6 6h5v5H6z" fill="#5c7f7c"/></symbol>
  <symbol id="gSym" viewBox="0 0 16 16"><use href="#gDis"/><path d="M6.500 6h4.500v4H8z" fill="#d5e6d2"/></symbol>
  <symbol id="gUni" viewBox="0 0 16 16"><use href="#gDis"/><path d="M6.500 6h4.500v4.500c-3 0-4-2-4.500-4.500z" fill="#8aa9a8" stroke="#5d7d96"/></symbol>
  <symbol id="iter" viewBox="0 0 24 24"><path d="M9 3H4q-2 0-2 2v12q0 2 2 2h4v3l5-5-5-4v2H6V7h3z" fill="#8cc48c" stroke="#43854a"/><path d="M15 20h5q2 0 2-2V6q0-2-2-2h-4V1l-5 5 5 4V8h2v8h-3z" fill="#8cc48c" stroke="#43854a"/></symbol>
  <symbol id="wrench" viewBox="0 0 24 24"><path d="M2 2l4 4 3-3-4-3c4-1 7 2 6 6l5 5-3 3-5-5c-4 1-7-2-6-6z" fill="#e8e8e8" stroke="#555"/><path d="M13 13l9 10" stroke="#8a7420" stroke-width="6"/><path d="M13 13l9 10" stroke="#f3d46a" stroke-width="4"/></symbol>
</svg>

<main class="desktop">

<section class="shot shot-first">
<div class="window">
  <header class="titlebar"><svg class="s16"><use href="#qgis"/></svg><h1>*Projekt bez nazwy — QGIS</h1><button class="cut-min" aria-label="Minimalizuj"></button></header>
  <nav class="menubar">
    <button>Pro<u>j</u>ekt</button><button><u>E</u>dycja</button><button><u>W</u>idok</button><button>W<u>a</u>rstwa</button><button><u>U</u>stawienia</button><button><u>W</u>tyczki</button><button>Wekt<u>o</u>r</button><button><u>R</u>aster</button><button><u>B</u>azy danych</button><button>W <u>i</u>nternecie</button><button>Siatka</button><button>Pro<u>c</u>essing</button><button><u>P</u>omoc</button>
  </nav>
  <div class="toolbar">
    <i class="grip first"></i><button><svg><use href="#new"/></svg></button><button><svg><use href="#open"/></svg></button><button><svg><use href="#save"/></svg></button><button><svg><use href="#layout"/></svg></button><button><svg><use href="#layouts"/></svg></button><button><svg><use href="#style"/></svg></button>
    <i class="grip"></i><button><svg><use href="#pan"/></svg></button><button><svg><use href="#pansel"/></svg></button><button><svg><use href="#zin"/></svg></button><button><svg><use href="#zout"/></svg></button><button><svg><use href="#zfull"/></svg></button><button><svg><use href="#zsel"/></svg></button><button><svg><use href="#zlay"/></svg></button><button disabled><svg><use href="#znat"/></svg></button><button><svg><use href="#zprev"/></svg></button><button disabled><svg><use href="#znext"/></svg></button><button><svg><use href="#mapview"/></svg></button><button><svg><use href="#map3d"/></svg></button><button><svg><use href="#bmnew"/></svg></button><button><svg><use href="#bm"/></svg></button><button><svg><use href="#clock"/></svg></button><button><svg><use href="#refresh"/></svg></button>
    <i class="grip"></i><button><svg><use href="#ident"/></svg></button><button><svg><use href="#table"/></svg></button><button><svg><use href="#abacus"/></svg></button><button><svg><use href="#gear"/></svg></button><button><svg><use href="#sigma"/></svg></button><button><svg><use href="#ruler"/></svg></button><i class="drop"></i><button><svg><use href="#tip"/></svg></button><button disabled><svg><use href="#action"/></svg></button><i class="drop off"></i><button><svg><use href="#textann"/></svg></button><i class="drop"></i>
  </div>
  <div class="toolbar">
    <i class="grip first"></i><button><svg><use href="#dsm"/></svg></button><button><svg><use href="#geopkg"/></svg></button><button><svg><use href="#shp"/></svg></button><button><svg><use href="#feather"/></svg></button><button><svg><use href="#chip"/></svg></button><i class="sep"></i><button><svg><use href="#virt"/></svg></button><i class="sep"></i>
    <i class="grip"></i><button class="corner" disabled><svg><use href="#pencils"/></svg></button><button><svg><use href="#pencil"/></svg></button><button disabled><svg><use href="#saveed"/></svg></button><button disabled><svg><use href="#addf"/></svg></button><button disabled><svg><use href="#vertex"/></svg></button><i class="drop mid"></i><button disabled><svg><use href="#modattr"/></svg></button><button disabled><svg><use href="#trash"/></svg></button><button disabled><svg><use href="#cut"/></svg></button><button disabled><svg><use href="#copy"/></svg></button><button disabled><svg><use href="#paste"/></svg></button><button disabled><svg><use href="#undo"/></svg></button><button disabled><svg><use href="#redo"/></svg></button>
    <i class="grip"></i><button><svg><use href="#abcy"/></svg></button><button><svg><use href="#pie"/></svg></button><i class="sep"></i><button><svg><use href="#abcb"/></svg></button><button><svg><use href="#abcr"/></svg></button><i class="sep"></i><button disabled><svg><use href="#lpin"/></svg></button><button disabled><svg><use href="#leye"/></svg></button><button disabled><svg><use href="#lmove"/></svg></button><button disabled><svg><use href="#lrot"/></svg></button><button disabled><svg><use href="#ledit"/></svg></button>
    <i class="grip"></i><button><svg><use href="#globe"/></svg></button><i class="grip"></i><button><svg><use href="#python"/></svg></button><i class="grip"></i><button><svg><use href="#help"/></svg></button><i class="grip"></i><button><svg><use href="#plug"/></svg></button>
  </div>
  <div class="toolbar">
    <i class="grip first"></i><span class="pressed"><button><svg><use href="#select"/></svg></button><i class="drop"></i></span><button><svg><use href="#selform"/></svg></button><i class="drop"></i><button><svg><use href="#desel"/></svg></button><i class="drop"></i><button><svg><use href="#selloc"/></svg></button>
  </div>
  <div class="workspace">
    <aside class="side">
      <div class="panel-title"><h2>Przeglądarka</h2><button aria-label="Odepnij"><svg><use href="#float"/></svg></button><button aria-label="Zamknij"><svg><use href="#closep"/></svg></button></div>
      <div class="panel-tools"><button><svg><use href="#paddl"/></svg></button><button><svg><use href="#refresh"/></svg></button><button><svg><use href="#filter"/></svg></button><button><svg><use href="#collapse"/></svg></button><button><svg><use href="#info"/></svg></button></div>
      <div class="tree-box">
        <ul class="tree">
          <li class="l2 closed"><svg><use href="#folder"/></svg>raster</li><li class="l2 opened"><svg><use href="#folder"/></svg>shapefiles</li>
          <li class="l3"><svg><use href="#poly"/></svg>airports.shp</li><li class="l3"><svg><use href="#poly"/></svg>alaska.shp</li><li class="l3"><svg><use href="#poly"/></svg>builtups.shp</li><li class="l3"><svg><use href="#poly"/></svg>grassland.shp</li><li class="l3"><svg><use href="#poly"/></svg>lakes.shp</li><li class="l3"><svg><use href="#poly"/></svg>landice.shp</li><li class="l3"><svg><use href="#poly"/></svg>majrivers.shp</li><li class="l3"><svg><use href="#poly"/></svg>pipelines.shp</li><li class="l3"><svg><use href="#poly"/></svg>popp.shp</li><li class="l3"><svg><use href="#poly"/></svg>railroads.shp</li><li class="l3"><svg><use href="#poly"/></svg>regions.shp</li><li class="l3"><svg><use href="#poly"/></svg>rivers.shp</li><li class="l3"><svg><use href="#poly"/></svg>storagep.shp</li><li class="l3"><svg><use href="#poly"/></svg>swamp.shp</li><li class="l3 hover"><svg><use href="#polyh"/></svg>trails.shp</li><li class="l3"><svg><use href="#poly"/></svg>trees.shp</li><li class="l3"><svg><use href="#poly"/></svg>tundra.shp</li>
          <li class="l2"><svg><use href="#html"/></svg>README.html</li><li class="l2"><svg><use href="#poly"/></svg>VEGDESC_Mixed Trees.shp</li><li class="l1"><svg><use href="#raster"/></svg>bazyDanych.txt</li>
        </ul>
        <div class="vscroll"><i class="arrow up"></i><i class="track a"></i><i class="thumb"></i><i class="track b"></i><i class="arrow down"></i></div>
        <div class="hscroll"><i class="arrow left"></i><i class="thumb"></i><i class="track"></i><i class="arrow right"></i></div>
      </div>
      <div class="splitter"></div>
      <div class="panel-title"><h2>Warstwy</h2><button aria-label="Odepnij"><svg><use href="#float"/></svg></button><button aria-label="Zamknij"><svg><use href="#closep"/></svg></button></div>
      <div class="panel-tools"><button><svg><use href="#brush"/></svg></button><button><svg><use href="#addgrp"/></svg></button><button><svg><use href="#eye"/></svg></button><button><svg><use href="#filter"/></svg></button><button><svg><use href="#expr"/></svg></button><i class="drop"></i><button><svg><use href="#expand"/></svg></button><button><svg><use href="#collapse"/></svg></button><button><svg><use href="#remove"/></svg></button></div>
      <ul class="layers">
        <li class="on"><label><input type="checkbox" checked><i class="sw brown"></i><span>Bufor lotnisk</span></label><svg><use href="#mem"/></svg></li>
        <li><label><input type="checkbox"><i class="pt"></i><span>airports</span></label></li>
        <li><label><input type="checkbox"><i class="ln green"></i><span>trails</span></label></li>
        <li class="sel"><label><input type="checkbox" checked><i class="sw steel"></i><span>Bufor kolei</span></label><svg><use href="#mem"/></svg></li>
        <li><label><input type="checkbox"><i class="ln pink"></i><span>railroads</span></label></li>
      </ul>
    </aside>
    <div class="map">
      <svg viewBox="352 161 1453 840" preserveAspectRatio="xMinYMin meet" role="img" aria-label="Bufory lotnisk i kolei">
        <defs><path id="b" d="M44 0l-2 14-6 12-10 10-12 6-14 2-14-2-12-6-10-10-6-12-2-14 2-14 6-12 10-10 12-6 14-2 14 2 12 6 10 10 6 12z" stroke="#232323"/></defs>
        <g fill="#7f8c8f" stroke="#232323"><path d="M1226 420l52-24 0 34-7 14-10 12-41-8-1-9z"/><path d="M1222 437q14-12 25-1 9 6 14 18M1240 425q20 8 22 28M1250 420q12 14 16 28M1274 400q2 30-12 54M1270 400q2 30-14 52" fill="none"/><use href="#b" x="1243" y="560"/><use href="#b" x="1245" y="563"/></g>
        <g fill="#91522d">
        <use href="#b" x="974" y="219"/><use href="#b" x="977" y="252"/><use href="#b" x="1069" y="250"/><use href="#b" x="1026" y="272"/><use href="#b" x="1190" y="261"/><use href="#b" x="1313" y="267"/><use href="#b" x="1148" y="307"/><use href="#b" x="862" y="298"/><use href="#b" x="880" y="318"/><use href="#b" x="1000" y="300"/><use href="#b" x="995" y="327"/><use href="#b" x="994" y="335"/><use href="#b" x="994" y="351"/><use href="#b" x="974" y="360"/><use href="#b" x="763" y="365"/><use href="#b" x="788" y="376"/><use href="#b" x="996" y="402"/><use href="#b" x="1081" y="367"/><use href="#b" x="1081" y="370"/><use href="#b" x="1082" y="383"/><use href="#b" x="1181" y="346"/><use href="#b" x="1179" y="410"/><use href="#b" x="1275" y="358"/><use href="#b" x="1271" y="359"/><use href="#b" x="1287" y="364"/><use href="#b" x="1246" y="374"/><use href="#b" x="1246" y="386"/><use href="#b" x="1319" y="394"/><use href="#b" x="1375" y="416"/><use href="#b" x="1409" y="431"/><use href="#b" x="909" y="445"/><use href="#b" x="902" y="359"/><use href="#b" x="1004" y="464"/><use href="#b" x="1014" y="518"/><use href="#b" x="930" y="485"/><use href="#b" x="865" y="488"/><use href="#b" x="848" y="556"/><use href="#b" x="956" y="551"/><use href="#b" x="1105" y="456"/><use href="#b" x="1101" y="457"/><use href="#b" x="1098" y="459"/><use href="#b" x="1105" y="547"/><use href="#b" x="1208" y="571"/><use href="#b" x="1212" y="574"/><use href="#b" x="1231" y="485"/><use href="#b" x="1337" y="483"/><use href="#b" x="1256" y="518"/><use href="#b" x="1240" y="522"/><use href="#b" x="1245" y="535"/><use href="#b" x="1243" y="537"/><use href="#b" x="1241" y="539"/><use href="#b" x="1237" y="541"/><use href="#b" x="1324" y="535"/><use href="#b" x="1347" y="564"/><use href="#b" x="1253" y="591"/><use href="#b" x="1119" y="613"/><use href="#b" x="1111" y="632"/><use href="#b" x="1205" y="617"/><use href="#b" x="1030" y="644"/><use href="#b" x="1075" y="665"/><use href="#b" x="938" y="655"/><use href="#b" x="1182" y="711"/><use href="#b" x="1018" y="746"/><use href="#b" x="717" y="688"/><use href="#b" x="724" y="720"/><use href="#b" x="899" y="820"/><use href="#b" x="782" y="866"/><use href="#b" x="706" y="898"/><use href="#b" x="542" y="890"/><use href="#b" x="1495" y="587"/><use href="#b" x="1600" y="563"/><use href="#b" x="1598" y="574"/><use href="#b" x="1605" y="614"/><use href="#b" x="1617" y="628"/><use href="#b" x="1671" y="670"/><use href="#b" x="1697" y="669"/><use href="#b" x="1717" y="680"/><use href="#b" x="1712" y="727"/><use href="#b" x="1760" y="739"/>
        </g>
      </svg>
    </div>
  </div>
  <footer class="status">
    <div class="locator"><svg><use href="#search"/></svg><input type="text" placeholder="Szukana fraza (Ctrl+K)" aria-label="Szukana fraza"></div>
    <label class="f-coord">Współrzędne<input class="w-coord-s" type="text" value="820366,4667833"></label><svg class="s-mouse"><use href="#mouse"/></svg>
    <label>Skala<select class="w-scale"><option>1:8601600</option></select></label><svg class="s-lock"><use href="#lock"/></svg>
    <label>Powiększenie<span class="spin"><input class="w-mag" type="text" value="100%"></span></label>
    <label class="f-rot">Obrót<span class="spin"><input class="w-rot" type="text" value="0,0 °"></span></label>
    <label class="f-ren"><input type="checkbox" checked>Renderuj</label>
  </footer>
</div>
<p class="note note-1">1 - tworzymy odpowiednie bufory dla warstw,<br>brak dróg</p>
</section>

<section class="shot shot-second">
<div class="window shifted">
  <header class="titlebar"><svg class="s16"><use href="#qgis"/></svg><h1>*Projekt bez nazwy — QGIS</h1><div class="winctl"><button aria-label="Minimalizuj"><svg viewBox="0 0 12 12"><path d="M1 6.500h10" stroke="#000"/></svg></button><button aria-label="Przywróć"><svg viewBox="0 0 12 12"><path d="M1.500 3.500h7v7h-7zM3.500 3V1.500h7v7H9" fill="none" stroke="#000"/></svg></button><button aria-label="Zamknij"><svg viewBox="0 0 12 12"><path d="M1 1l10 10M11 1L1 11" stroke="#000"/></svg></button></div></header>
  <nav class="menubar">
    <button>Pro<u>j</u>ekt</button><button><u>E</u>dycja</button><button><u>W</u>idok</button><button>W<u>a</u>rstwa</button><button><u>U</u>stawienia</button><button><u>W</u>tyczki</button><div class="menu-open"><button class="active">Wekt<u>o</u>r</button>
      <ul class="menu">
        <li class="sub"><u>G</u>roup Stats</li>
        <li class="sub active">Narzędzia <u>g</u>eoprocesingu
          <ul class="menu submenu">
            <li><svg><use href="#gBuf"/></svg>Bufor...</li><li><svg><use href="#gClip"/></svg>Przytnij...</li><li><svg><use href="#gHull"/></svg>Otoczka wypukła...</li><li><svg><use href="#gDiff"/></svg>Różnica...</li><li><svg><use href="#gDis"/></svg>Agreguj...</li><li class="active"><svg><use href="#gInt"/></svg>Iloczyn...</li><li><svg><use href="#gSym"/></svg>Różnica symetryczna...</li><li><svg><use href="#gUni"/></svg>Suma...</li><li><svg><use href="#gDis"/></svg>Eliminuj wybrane poligony...</li>
          </ul>
        </li>
        <li class="sub">Narzędzia g<u>e</u>ometrii</li><li class="sub">Narzędzia <u>a</u>nalizy</li><li class="sub">Narzędzia <u>b</u>adawcze</li><li class="sub">Narzędzia zarządzania <u>d</u>anymi</li>
      </ul>
    </div><button><u>R</u>aster</button><button><u>B</u>azy danych</button><button>W <u>i</u>nternecie</button><button>Siatka</button><button>Pro<u>c</u>essing</button><button><u>P</u>omoc</button>
  </nav>
  <div class="toolbar">
    <i class="grip first"></i><button><svg><use href="#new"/></svg></button><button><svg><use href="#open"/></svg></button><button><svg><use href="#save"/></svg></button><button><svg><use href="#layout"/></svg></button><button><svg><use href="#layouts"/></svg></button><button><svg><use href="#style"/></svg></button>
    <i class="grip"></i><button><svg><use href="#pan"/></svg></button><button><svg><use href="#pansel"/></svg></button><button><svg><use href="#zin"/></svg></button><button><svg><use href="#zout"/></svg></button><button><svg><use href="#zfull"/></svg></button><button><svg><use href="#zsel"/></svg></button><button><svg><use href="#zlay"/></svg></button><button disabled><svg><use href="#znat"/></svg></button><button><svg><use href="#zprev"/></svg></button><button disabled><svg><use href="#znext"/></svg></button><button><svg><use href="#mapview"/></svg></button><button><svg><use href="#map3d"/></svg></button><button><svg><use href="#bmnew"/></svg></button><button><svg><use href="#bm"/></svg></button><button><svg><use href="#clock"/></svg></button><button><svg><use href="#refresh"/></svg></button>
    <i class="grip"></i><button><svg><use href="#ident"/></svg></button><button><svg><use href="#table"/></svg></button><button><svg><use href="#abacus"/></svg></button><button><svg><use href="#gear"/></svg></button><button><svg><use href="#sigma"/></svg></button><button><svg><use href="#ruler"/></svg></button><i class="drop"></i><button><svg><use href="#tip"/></svg></button><button disabled><svg><use href="#action"/></svg></button><i class="drop off"></i><button><svg><use href="#textann"/></svg></button><i class="drop"></i>
  </div>
  <div class="toolbar">
    <i class="grip first"></i><button><svg><use href="#dsm"/></svg></button><button><svg><use href="#geopkg"/></svg></button><button><svg><use href="#shp"/></svg></button><button><svg><use href="#feather"/></svg></button><button><svg><use href="#chip"/></svg></button><i class="sep"></i><button><svg><use href="#virt"/></svg></button><i class="sep"></i>
    <i class="grip"></i><button class="corner" disabled><svg><use href="#pencils"/></svg></button><button><svg><use href="#pencil"/></svg></button><button disabled><svg><use href="#saveed"/></svg></button><button disabled><svg><use href="#addf"/></svg></button><button disabled><svg><use href="#vertex"/></svg></button><i class="drop mid"></i><button disabled><svg><use href="#modattr"/></svg></button><button disabled><svg><use href="#trash"/></svg></button><button disabled><svg><use href="#cut"/></svg></button><button disabled><svg><use href="#copy"/></svg></button><button disabled><svg><use href="#paste"/></svg></button><button disabled><svg><use href="#undo"/></svg></button><button disabled><svg><use href="#redo"/></svg></button>
    <i class="grip"></i><button><svg><use href="#abcy"/></svg></button><button><svg><use href="#pie"/></svg></button><i class="sep"></i><button><svg><use href="#abcb"/></svg></button><button><svg><use href="#abcr"/></svg></button><i class="sep"></i><button disabled><svg><use href="#lpin"/></svg></button><button disabled><svg><use href="#leye"/></svg></button><button disabled><svg><use href="#lmove"/></svg></button><button disabled><svg><use href="#lrot"/></svg></button><button disabled><svg><use href="#ledit"/></svg></button>
    <i class="grip"></i><button><svg><use href="#globe"/></svg></button><i class="grip"></i><button><svg><use href="#python"/></svg></button><i class="grip"></i><button><svg><use href="#help"/></svg></button><i class="grip"></i><button><svg><use href="#plug"/></svg></button>
  </div>
  <div class="toolbar">
    <i class="grip first"></i><span class="pressed"><button><svg><use href="#select"/></svg></button><i class="drop"></i></span><button><svg><use href="#selform"/></svg></button><i class="drop"></i><button><svg><use href="#desel"/></svg></button><i class="drop"></i><button><svg><use href="#selloc"/></svg></button>
  </div>
  <div class="workspace">
    <aside class="side">
      <div class="panel-title"><h2>Przeglądarka</h2><button aria-label="Odepnij"><svg><use href="#float"/></svg></button><button aria-label="Zamknij"><svg><use href="#closep"/></svg></button></div>
      <div class="panel-tools"><button><svg><use href="#paddl"/></svg></button><button><svg><use href="#refresh"/></svg></button><button><svg><use href="#filter"/></svg></button><button><svg><use href="#collapse"/></svg></button><button><svg><use href="#info"/></svg></button></div>
      <div class="tree-box">
        <ul class="tree">
          <li class="l2 closed"><svg><use href="#folder"/></svg>raster</li><li class="l2 opened"><svg><use href="#folder"/></svg>shapefiles</li>
          <li class="l3"><svg><use href="#poly"/></svg>airports.shp</li><li class="l3"><svg><use href="#poly"/></svg>alaska.shp</li><li class="l3"><svg><use href="#poly"/></svg>builtups.shp</li><li class="l3"><svg><use href="#poly"/></svg>grassland.shp</li><li class="l3"><svg><use href="#poly"/></svg>lakes.shp</li><li class="l3"><svg><use href="#poly"/></svg>landice.shp</li><li class="l3"><svg><use href="#poly"/></svg>majrivers.shp</li><li class="l3"><svg><use href="#poly"/></svg>pipelines.shp</li><li class="l3"><svg><use href="#poly"/></svg>popp.shp</li><li class="l3"><svg><use href="#poly"/></svg>railroads.shp</li><li class="l3"><svg><use href="#poly"/></svg>regions.shp</li><li class="l3"><svg><use href="#poly"/></svg>rivers.shp</li><li class="l3"><svg><use href="#poly"/></svg>storagep.shp</li><li class="l3"><svg><use href="#poly"/></svg>swamp.shp</li><li class="l3 hover"><svg><use href="#polyh"/></svg>trails.shp</li><li class="l3"><svg><use href="#poly"/></svg>trees.shp</li><li class="l3"><svg><use href="#poly"/></svg>tundra.shp</li>
          <li class="l2"><svg><use href="#html"/></svg>README.html</li><li class="l2"><svg><use href="#poly"/></svg>VEGDESC_Mixed Trees.shp</li><li class="l1"><svg><use href="#raster"/></svg>bazyDanych.txt</li>
        </ul>
        <div class="vscroll"><i class="arrow up"></i><i class="track a"></i><i class="thumb"></i><i class="track b"></i><i class="arrow down"></i></div>
        <div class="hscroll"><i class="arrow left"></i><i class="thumb"></i><i class="track"></i><i class="arrow right"></i></div>
      </div>
      <div class="splitter"></div>
      <div class="panel-title"><h2>Warstwy</h2><button aria-label="Odepnij"><svg><use href="#float"/></svg></button><button aria-label="Zamknij"><svg><use href="#closep"/></svg></button></div>
      <div class="panel-tools"><button><svg><use href="#brush"/></svg></button><button><svg><use href="#addgrp"/></svg></button><button><svg><use href="#eye"/></svg></button><button><svg><use href="#filter"/></svg></button><button><svg><use href="#expr"/></svg></button><i class="drop"></i><button><svg><use href="#expand"/></svg></button><button><svg><use href="#collapse"/></svg></button><button><svg><use href="#remove"/></svg></button></div>
      <ul class="layers">
        <li><label><input type="checkbox"><i class="sw brown"></i><span>Bufor lotnisk</span></label><svg><use href="#mem"/></svg></li>
        <li><label><input type="checkbox"><i class="pt"></i><span>airports</span></label></li>
        <li><label><input type="checkbox"><i class="ln green"></i><span>trails</span></label></li>
        <li class="sel"><label><input type="checkbox" checked><i class="sw olive"></i><span>Iloczyn</span></label><svg><use href="#mem"/></svg></li>
        <li><label><input type="checkbox"><i class="sw rust"></i><span>Różnica</span></label><svg><use href="#mem"/></svg></li>
        <li><label><input type="checkbox"><i class="sw gray"></i><span>Bufor kolei</span></label><svg><use href="#mem"/></svg></li>
        <li><label><input type="checkbox"><i class="ln pink"></i><span>railroads</span></label></li>
      </ul>
    </aside>
    <div class="map closed-right">
      <svg viewBox="346 1193 1567 840" preserveAspectRatio="xMinYMin meet" role="img" aria-label="Iloczyn buforów">
        <g transform="translate(1080 1500) scale(.333)" fill="#d5b43c" stroke="#232323" stroke-width="3">
          <circle cx="175" cy="105" r="35"/><circle cx="188" cy="108" r="34"/><circle cx="207" cy="118" r="34"/><path d="M163 82l62 28M172 95l30 25M204 92l20 20M180 140c25-10 45-20 48-42M195 146c25-5 38-20 40-38" fill="none"/>
          <path d="M118 160l70 0 1 35c-15 22-45 24-70 20z"/><path d="M116 186c20 12 50 8 72-26M119 210c15-24 45-24 62 0" fill="none"/>
          <circle cx="142" cy="152" r="37"/><circle cx="145" cy="122" r="36"/><circle cx="143" cy="131" r="35"/>
          <path d="M101 236c20-6 48 2 67 20-2 30-10 40-14 62l-60 6c-8-28-10-50 7-72z"/><path d="M101 236c6 30 40 60 67 48M115 237c8 24 30 26 52 20M92 316c15-26 40-30 64-26M92 318c20-18 40-22 64-18" fill="none"/>
          <circle cx="130" cy="346" r="34"/><path d="M92 322c30-12 40-12 62-2" fill="none" stroke-width="7"/><circle cx="154" cy="355" r="35"/><circle cx="135" cy="378" r="35"/>
          <circle cx="172" cy="408" r="35"/><path d="M106 410c20-14 60-24 100-4" fill="none" stroke-width="5"/><circle cx="158" cy="428" r="35"/><circle cx="155" cy="456" r="34"/><circle cx="157" cy="445" r="34"/><path d="M124 460c8 4 20 12 22 28" fill="none"/>
          <path d="M655 370c15-10 30-10 42 0 14 5 18 20 15 40 0 22-15 40-36 40-22 0-34-14-34-34 0-20 2-38 13-46z"/><path d="M655 372c18-5 32-2 48 4M650 436c18-8 38-8 54 0" fill="none"/>
        </g>
      </svg>
    </div>
  </div>
  <footer class="status full">
    <div class="locator"><svg><use href="#search"/></svg><input type="text" placeholder="Szukana fraza (Ctrl+K)" aria-label="Szukana fraza"></div>
    <label class="f-coord">Współrzędne<input class="w-coord-l" type="text" value="-10260168,10566499"></label><svg class="s-mouse"><use href="#mouse"/></svg>
    <label>Skala<select class="w-scale tight"><option>1:17203200</option></select></label><svg class="s-lock"><use href="#lock"/></svg>
    <label>Powiększenie<span class="spin"><input class="w-mag" type="text" value="100%"></span></label>
    <label class="f-rot">Obrót<span class="spin"><input class="w-rot" type="text" value="0,0 °"></span></label>
    <label class="f-ren"><input type="checkbox" checked>Renderuj</label>
    <button class="epsg"><svg><use href="#crs"/></svg>EPSG:2964</button><button class="msg" aria-label="Komunikaty"><svg><use href="#bubble"/></svg></button>
  </footer>
</div>

<div class="dialog" role="dialog" aria-label="Iloczyn">
  <header><svg class="s16"><use href="#qgis"/></svg><h2>Iloczyn</h2><button aria-label="Zamknij"><svg viewBox="0 0 12 12"><path d="M1 1l10 10M11 1L1 11" stroke="#777"/></svg></button></header>
  <div class="dlg-main">
    <div class="dlg-left">
      <div class="tabs"><button class="tab current">Parametry</button><button class="tab">Plik zdarzeń</button></div>
      <form class="params">
        <label for="src">Warstwa źródłowa</label>
        <div class="combo-row"><span class="combo"><svg><use href="#polyg"/></svg><select id="src"><option>Bufor lotnisk [EPSG:2964]</option></select></span><button type="button"><svg><use href="#iter"/></svg></button><button type="button"><svg><use href="#wrench"/></svg></button></div>
        <label class="check off"><input type="checkbox" disabled>Tylko zaznaczone obiekty</label>
        <label for="ovl">Warstwa nakładki</label>
        <div class="combo-row"><span class="combo"><svg><use href="#polyg"/></svg><select id="ovl"><option>Bufor kolei [EPSG:2964]</option></select></span><button type="button"><svg><use href="#iter"/></svg></button><button type="button"><svg><use href="#wrench"/></svg></button></div>
        <label class="check off"><input type="checkbox" disabled>Tylko zaznaczone obiekty</label>
        <label for="fa">Wybierz pola z warstwy wejściowej (zostaw puste, aby wybrać wszystkie) [opcjonalnie]</label>
        <input class="field ro" id="fa" type="text" value="Wybrano 0 opcji" readonly>
        <label for="fb">Wybierz pola z warstwy nakładki (zostaw puste, aby wybrać wszystkie) [opcjonalnie]</label>
        <input class="field ro" id="fb" type="text" value="Wybrano 0 opcji" readonly>
        <button type="button" class="adv">Zaawansowane parametry</button>
        <label for="out">Iloczyn</label>
        <input class="field" id="out" type="text" placeholder="[Twórz warstwę tymczasową]">
        <label class="check last"><input type="checkbox" checked>Wczytaj plik wynikowy po zakończeniu</label>
        <div class="hscroll"><i class="arrow left"></i><i class="thumb"></i><i class="track"></i><i class="arrow right"></i></div>
      </form>
    </div>
    <div class="dlg-split"><i></i></div>
    <article class="dlg-help"><h3>Iloczyn</h3><p>Algorytm wyodrębnia zachodzące na siebie części obiektów w warstwach wejściowej i nakładki. Obiektom wyjściowej warstwy Iloczynu przypisywane są atrybuty zachodzących na siebie elementów zarówno z warstwy wejściowej, jak i nakładki.</p></article>
  </div>
  <div class="dlg-row progress-row"><div class="progress">0%</div><button class="btn" disabled>Anuluj</button></div>
  <div class="dlg-row"><button class="btn wide">Wykonaj jako przetwarzanie wsadowe...</button><button class="btn push">Uruchom</button><button class="btn">Zamknij</button><button class="btn">Pomoc</button></div>
</div>

<p class="note note-2">Robimy iloczyn buforów i otrzymujemy najlepsze miejsce dla hotelu</p>

<footer class="taskbar">
  <button class="start"><svg viewBox="0 0 24 24"><path d="M4 6l7-1v6.500H4zM12 4.800L20 4v7.500h-8zM4 12.500h7V19l-7-1zM12 12.500h8V20l-8-.800z" fill="#fff"/></svg></button>
  <button><svg viewBox="0 0 24 24"><circle cx="14" cy="9" r="5.500" fill="none" stroke="#fff" stroke-width="1.300"/><path d="M10 13l-6 7" stroke="#fff" stroke-width="1.300"/></svg></button>
  <button><svg viewBox="0 0 24 24"><path d="M1 1h22v22H1z" fill="#ffd400"/><path d="M12 23V13h11z" fill="#333"/><path d="M12 23V13h11L13 23z" fill="#555"/></svg></button>
  <button class="run"><svg viewBox="0 0 24 24"><path d="M1 4h8l2 2h12v16H1z" fill="#dba520"/><path d="M1 8h22v13H1z" fill="#fcd667"/><path d="M5 22v-7h14v7h-4v-4H9v4z" fill="#3a98d8"/></svg></button>
  <button><svg viewBox="0 0 24 24"><circle cx="12" cy="12" r="11" fill="#111"/><circle cx="12" cy="12" r="9" fill="#f9a01b"/><path d="M12 6l5 10H7z" fill="none" stroke="#111" stroke-width="2"/></svg></button>
  <button class="run"><svg viewBox="0 0 24 24"><circle cx="12" cy="12" r="11" fill="#fbc116"/><path d="M12 12L2.500 6.500A11 11 0 0 1 21.500 6.500z" fill="#e33b2e"/><path d="M2.500 6.500A11 11 0 0 0 11 23l4-8-6-1z" fill="#2da44f"/><circle cx="12" cy="12" r="5.500" fill="#fff"/><circle cx="12" cy="12" r="4.300" fill="#4285f4"/></svg></button>
  <button class="run"><svg viewBox="0 0 24 24"><circle cx="12" cy="12" r="11" fill="#1ed760"/><path d="M5 8.500c5-1.500 10-1 14 1.300M6 12.200c4-1.200 8-.800 11.500 1.200M7 15.700c3-.800 6.500-.500 9 1" fill="none" stroke="#111" stroke-width="2"/></svg></button>
  <button><svg viewBox="0 0 24 24"><path d="M0 0h24v24H0z" fill="#000"/><path d="M9.500 19V5l5 14V5" fill="none" stroke="#d81f26" stroke-width="2.500"/></svg></button>
  <button><svg viewBox="0 0 24 24"><path d="M2 1l9 1 4 8-8 13-6-4z" fill="#f2366b"/><path d="M13 1l9 5 1 12-10 5-6-8z" fill="#2a7bf6"/><path d="M2 15l6 8h6L8 12z" fill="#f97a12"/><rect x="5" y="5" width="14" height="14" fill="#000"/><text x="7" y="13" font-size="8" font-weight="bold" fill="#fff">IJ</text><path d="M7 17h5" stroke="#fff"/></svg></button>
  <button><svg viewBox="0 0 24 24"><path d="M1 1h22v22H1z" fill="#68217a"/><path d="M3 8l3-1 11 10V7L6 17l-3-1z" fill="none" stroke="#fff" stroke-width="2.500"/><path d="M16 3l5 2v14l-5 2z" fill="#fff"/></svg></button>
  <button><svg viewBox="0 0 24 24"><path d="M1 7l3-2 13 12V7L4 19l-3-2z" fill="none" stroke="#7a45c4" stroke-width="2.500"/><path d="M16 1l7 3v16l-7 3z" fill="#a57be8"/></svg></button>
  <button><svg viewBox="0 0 24 24"><circle cx="12" cy="12" r="11" fill="#fff"/><path d="M7 18V9c0-5 10-5 10 0v9z" fill="#3bd07c"/><path d="M7 9h10v9H7z" fill="#2aa9e0"/><text x="8" y="16.500" font-size="8" font-weight="bold" fill="#123">AI</text></svg></button>
  <button><svg viewBox="0 0 24 24"><circle cx="13" cy="5" r="4" fill="#7b83eb"/><circle cx="20" cy="7" r="2.500" fill="#5059c9"/><path d="M8 10h11v8c0 7-11 7-11 0z" fill="#7b83eb"/><path d="M18 10h6v7c0 4-5 4-6 3z" fill="#5059c9"/><rect x="0" y="6" width="12" height="12" rx="1" fill="#4b53bc"/><path d="M3 9h6M6 9v7" stroke="#fff" stroke-width="1.600"/></svg></button>
  <button class="run current"><svg><use href="#qgis"/></svg></button>
  <button class="run"><svg viewBox="0 0 24 24"><path d="M2 2h20v20H2z" fill="#c80a0a"/><path d="M12 5c2 4-3 12-6 13-2-2 6-5 12-4 1 2-5 0-6-9z" fill="none" stroke="#fff" stroke-width="1.300"/></svg></button>
  <button class="run"><svg viewBox="0 0 24 24"><path d="M1 2h22v20H1z" fill="#bbb"/><path d="M2 5h20v16H2z" fill="#000"/><path d="M4 8h4M9 8h4M14 10h4" stroke="#fff"/></svg></button>
  <button class="run"><svg viewBox="0 0 24 24"><path d="M12 0l6 6-6 6-6-6z" fill="#f07f77"/><path d="M6 6l6 6-6 6-6-6z" fill="#8ab8f0"/><path d="M18 6l6 6-6 6-6-6z" fill="#7fd07f"/><path d="M12 12l6 6-6 6-6-6z" fill="#f5df6a"/><path d="M9 3l4 6v9M13 8l5 4" stroke="#222" stroke-width="1.800" fill="none"/><circle cx="13" cy="8" r="2"/><circle cx="13" cy="17" r="2"/><circle cx="18" cy="12" r="2"/></svg></button>
  <button class="run"><svg viewBox="0 0 24 24"><path d="M1 14C1 4 16 0 19 9c1 5-4 3-5 6s1 7-4 7c-6 0-9-3-9-8z" fill="#a9d3ee" stroke="#5a8db5"/><circle cx="6" cy="11" r="2" fill="#e33"/><circle cx="11" cy="8" r="2" fill="#fb3"/><circle cx="5" cy="16" r="2" fill="#3a4"/><circle cx="10" cy="18" r="2" fill="#36c"/><path d="M13 20l8-16" stroke="#c88238" stroke-width="2.500"/><path d="M20 5l1-4 2 1v3z" fill="#e8b878"/></svg></button>
  <time class="clock">18:12<br>2020-11-14</time>
</footer>
</section>
</main>
</body>
</html>
```
FILE: styles.css
```css
*, *::before, *::after { box-sizing: border-box; }
:root {
  --ui: "Open Sans", "Noto Sans", sans-serif;
  --form: "DejaVu Sans Condensed", "DejaVu Sans", sans-serif;
  --face: #f0f0f0;
  --line: #b5b5b5;
  --hot: #0078d7;
}
body { margin: 0; background: #fff; color: #000; font: 11px/18px var(--ui); }
ul { list-style: none; margin: 0; padding: 0; }
h1, h2, h3, p { margin: 0; font-size: inherit; font-weight: normal; }
button { border: 0; padding: 0; background: none; font: inherit; color: inherit; }
input, select { font: inherit; color: inherit; margin: 0; border-radius: 0; }
svg { display: block; flex: none; }
.sprite { position: absolute; width: 0; height: 0; visibility: hidden; }
.s16 { width: 16px; height: 16px; }

/* two application windows, one under the other */
.shot { position: relative; overflow: hidden; }
.shot-first { margin-right: 199px; }
.shot-second { margin-right: 90px; }
.window { background: var(--face); }
.shifted { margin-left: -6px; }

.titlebar { display: flex; align-items: center; height: 23px; padding-left: 3px; background: #fff; }
.titlebar h1 { flex: 1; padding-left: 5px; }
.cut-min { width: 5px; height: 1px; background: #000; }
.winctl { display: flex; padding-right: 4px; }
.winctl button { width: 45px; height: 20px; display: grid; place-items: center; }
.winctl svg { width: 12px; height: 12px; }

.menubar { display: flex; height: 20px; padding-left: 4px; border-bottom: 1px solid #d5d5d5; }
.menubar button { padding: 0 8px 0 7px; height: 19px; white-space: nowrap; }
.menubar .active { background: var(--hot); color: #fff; }
.menu-open { position: relative; }
.menu { position: absolute; z-index: 5; left: 2px; top: 19px; width: 230px; padding: 1px; background: #fff; border: 1px solid #999; box-shadow: 3px 3px 3px rgba(0,0,0,.5); color: #000; }
.menu li { position: relative; height: 23px; line-height: 22px; padding-left: 26px; white-space: nowrap; }
.menu li.active { background: var(--hot); color: #fff; }
.menu .sub::after { content: ""; position: absolute; right: 4px; top: 8px; border: 3px solid transparent; border-left: 4px solid #444; border-right: 0; }
.menu .sub.active::after { border-left-color: #9cf; }
.submenu { left: 228px; top: -3px; width: 247px; }
.submenu li { display: flex; align-items: center; gap: 4px; padding-left: 6px; }
.submenu svg { width: 16px; height: 16px; }

.toolbar { display: flex; align-items: center; height: 39px; border-bottom: 2px solid var(--line); background: linear-gradient(#fbfbfb, #efefef); }
.toolbar button { width: 33px; height: 31px; display: grid; place-items: center; }
.toolbar button svg { width: 24px; height: 24px; }
.toolbar button:disabled svg { opacity: .4; }
.grip { width: 16px; height: 18px; background: repeating-linear-gradient(#bbb 0 1px, transparent 1px 3px) 8px 0 / 1px 100% no-repeat, repeating-linear-gradient(#bbb 0 1px, transparent 1px 3px) 11px 0 / 1px 100% no-repeat; }
.grip.first { width: 12px; background-position: 5px 0, 8px 0; }
.sep { width: 4px; height: 22px; border-left: 1px solid #ccc; margin-left: 3px; }
.drop { width: 12px; height: 8px; background: #555; clip-path: polygon(2px 2px, 10px 2px, 6px 7px); }
.drop.off { background: #aaa; }
.drop.mid { background: #888; }
.pressed { display: flex; align-items: center; height: 31px; background: linear-gradient(90deg, transparent 33px, #9e9e9e 33px, #9e9e9e 34px, transparent 34px), #d6d6d6; border-radius: 2px; box-shadow: inset 0 0 0 1px #9e9e9e; }
.corner { position: relative; }
.corner::after { content: ""; position: absolute; right: 2px; bottom: 2px; border: 3px solid transparent; border-top: 4px solid #999; border-bottom: 0; }

.workspace { display: flex; gap: 6px; }
.side { width: 345px; flex: none; }
.panel-title { display: flex; align-items: center; gap: 2px; height: 20px; padding: 0 2px 0 4px; }
.panel-title h2 { flex: 1; }
.panel-title svg { width: 12px; height: 12px; }
.panel-tools { display: flex; align-items: center; height: 28px; padding-left: 3px; margin-bottom: 2px; }
.panel-tools button { width: 25px; display: grid; place-items: center; }
.panel-tools svg { width: 16px; height: 16px; }

.tree-box { display: grid; grid-template-columns: 1fr 14px; border: 1px solid var(--line); background: #fff; }
.tree { padding-top: 1px; }
.tree li { display: flex; align-items: center; gap: 6px; height: 18px; white-space: nowrap; position: relative; }
.tree svg { width: 16px; height: 16px; }
.l1 { padding-left: 143px; }
.l2 { padding-left: 163px; }
.l3 { padding-left: 183px; }
.hover { background: #efefef; }
.closed::before, .opened::before { content: ""; position: absolute; left: 148px; top: 5px; border: 4px solid transparent; border-left: 4px solid #555; border-right: 0; }
.opened::before { left: 146px; top: 7px; border: 4px solid transparent; border-top: 4px solid #555; border-bottom: 0; }
.vscroll { display: flex; flex-direction: column; border-left: 1px solid var(--line); background: #e6e6e6; }
.hscroll { display: flex; height: 14px; border-top: 1px solid var(--line); background: #e6e6e6; }
.arrow { width: 13px; height: 13px; background: #fff; display: grid; place-items: center; flex: none; }
.arrow::before { content: ""; border: 4px solid transparent; }
.up::before { border-bottom-color: #555; border-top: 0; }
.down::before { border-top-color: #555; border-bottom: 0; }
.left::before { border-right-color: #555; border-left: 0; }
.right::before { border-left-color: #555; border-right: 0; }
.vscroll .up { border-bottom: 1px solid var(--line); }
.vscroll .down { border-top: 1px solid var(--line); }
.vscroll .a { flex: 123; }
.vscroll .thumb { flex: 54; background: #fcfcfc; border: solid var(--line); border-width: 1px 0; }
.vscroll .b { flex: 193; }
.hscroll .thumb { flex: 217; background: linear-gradient(#fff, #f4f4f4); border: solid var(--line); border-width: 0 1px; }
.hscroll .track { flex: 85; border-right: 1px solid var(--line); }
.splitter { width: 16px; height: 1px; margin: 2px auto 3px; background: repeating-linear-gradient(90deg, #999 0 1px, transparent 1px 3px); }

.layers { height: 333px; padding-top: 1px; border: 1px solid var(--line); background: #fff; color: #777; font-size: 12px; font-weight: bold; font-style: italic; }
.layers li { display: flex; align-items: center; height: 18px; padding: 0 4px 0 23px; }
.layers label { display: flex; align-items: center; flex: 1; }
.layers label > i { margin: 0 6px; flex: none; }
.layers li > svg { width: 17px; height: 17px; }
.layers .on { color: #000; font-style: normal; font-size: 11px; }
.layers .sel { color: #fff; font-style: normal; font-size: 11px; text-decoration: underline; background: linear-gradient(90deg, var(--hot) 62px, #1684dd 62px); }
.sw { width: 16px; height: 16px; border: 1px solid rgba(0,0,0,.4); }
.brown { background: #91522d; }
.steel { background: #5a87a8; }
.olive { background: #94a46c; }
.rust { background: #a46f5a; }
.gray { background: #7f8c8f; }
.pt { width: 16px; height: 8px; background: radial-gradient(circle, #b7aa85 0 2px, #6b6554 3px, transparent 4px); }
.ln { width: 16px; height: 2px; }
.green { background: #c5dfb8; }
.pink { background: #f2b0c6; }

input[type="checkbox"] { appearance: none; width: 14px; height: 14px; flex: none; background: #fff; border: 1px solid #bbb; display: grid; place-items: center; }
input[type="checkbox"]:checked::after { content: ""; width: 10px; height: 10px; background: #000; clip-path: polygon(0 45%, 20% 40%, 38% 65%, 80% 0, 100% 0, 45% 100%, 32% 100%); }

.map { flex: 1; min-width: 0; position: relative; background: #fff; border: solid var(--line); border-width: 1px 0 1px 1px; }
.closed-right { border-right-width: 1px; }
.map svg { position: absolute; inset: 0; width: 100%; height: 100%; }

.status { display: flex; align-items: flex-start; height: 20px; padding: 2px 17px 0 4px; font: 11px/22px var(--form); overflow: hidden; }
.status.full { height: 28px; padding-right: 6px; padding-left: 0; }
.status label { display: flex; align-items: center; gap: 4px; height: 24px; position: relative; }
.status input[type="text"], .status select { height: 22px; border: 1px solid #a9a9a9; border-radius: 2px; background: #fff; padding: 0 4px; }
.locator { position: relative; width: 200px; margin: 1px auto 0 0; font: italic 11px/20px var(--ui); }
.locator input { width: 100%; }
.status .locator input { padding-left: 28px; }
.locator input::placeholder { color: #aaa; opacity: 1; }
.locator svg { position: absolute; left: 9px; top: 4px; width: 13px; height: 13px; }
.status.full .locator { width: 204px; }
.w-coord-s { width: 102px; text-align: center; }
.w-coord-l { width: 118px; text-align: center; }
.status svg { width: 16px; height: 16px; }
.s-mouse { margin: 4px 12px 0 4px; }
.s-lock { margin: 4px 7px 0 9px; }
.w-scale { width: 81px; }
.status select { appearance: none; background: linear-gradient(90deg, transparent calc(100% - 20px), #bbb calc(100% - 20px), #bbb calc(100% - 19px), #f2f2f2 calc(100% - 19px)), #fff; }
.status label:has(select)::after { content: ""; position: absolute; right: 7px; top: 10px; border: 4px solid transparent; border-top: 5px solid #555; border-bottom: 0; }
.status .tight { padding: 0; }
.spin { position: relative; display: flex; }
.spin::before, .spin::after { content: ""; position: absolute; right: 4px; border: 4px solid transparent; }
.spin::before { top: 5px; border-bottom: 4px solid #666; border-top: 0; }
.spin::after { bottom: 5px; border-top: 4px solid #666; border-bottom: 0; }
.w-mag { width: 87px; }
.w-rot { width: 83px; }
.f-rot { margin-left: 9px; }
.status .f-rot { gap: 7px; }
.f-ren { margin-left: 7px; }
.epsg { display: flex; align-items: center; gap: 2px; height: 24px; margin-left: 16px; }
.msg { margin: 4px 0 0 20px; }

/* captions written over the windows */
.note { position: absolute; z-index: 3; color: #ed1c24; font: 300 62px/86px var(--ui); -webkit-text-stroke: 1px #ed1c24; white-space: nowrap; }
.note-1 { left: 60px; top: 780px; }
.note-2 { left: 36px; top: 924px; }

.dialog { position: absolute; z-index: 4; left: 339px; top: 257px; width: 690px; border: 1px solid #999; background: var(--face); box-shadow: 2px 4px 12px rgba(0,0,0,.35); font: 11px/14px var(--form); padding-bottom: 10px; }
.dialog header { display: flex; align-items: center; height: 30px; background: #fff; padding: 0 9px 0 8px; color: #888; font: 11px/18px var(--ui); }
.dialog header h2 { flex: 1; padding-left: 5px; }
.dialog header button svg { width: 12px; height: 12px; }
.dlg-main { display: flex; padding: 11px 11px 0; }
.dlg-left { width: 394px; }
.tabs { display: flex; align-items: flex-end; height: 24px; }
.tab { height: 22px; width: 79px; background: #e6e6e6; border: 1px solid var(--line); border-left: 0; border-bottom: 0; }
.tab.current { height: 25px; width: 76px; margin-bottom: -1px; border-left: 1px solid var(--line); position: relative; background: #fff; }
.params { display: flex; flex-direction: column; border: 1px solid var(--line); padding-left: 5px; height: 404px; overflow: hidden; }
.params > label { height: 24px; line-height: 24px; white-space: nowrap; flex: none; }
.combo-row { display: flex; align-items: center; height: 24px; flex: none; }
.combo { position: relative; width: 318px; margin-right: 3px; flex: none; }
.combo svg { position: absolute; left: 6px; top: 4px; width: 16px; height: 16px; }
.combo select { appearance: none; width: 100%; height: 24px; padding-left: 23px; border: 1px solid #a9a9a9; border-radius: 2px; background: linear-gradient(#fff, #f1f1f1); }
.combo::after { content: ""; position: absolute; right: 7px; top: 10px; border: 4px solid transparent; border-top: 5px solid #555; border-bottom: 0; }
.combo-row button { width: 36px; flex: none; display: grid; place-items: center; }
.combo-row button svg { width: 24px; height: 24px; }
.params > .check { display: flex; align-items: center; gap: 4px; height: 20px; margin-top: 8px; }
.off { color: #888; }
.off input { background: #f2f2f2; }
.field { width: 420px; height: 22px; flex: none; margin-bottom: 1px; padding: 0 3px; border: 1px solid #a9a9a9; border-radius: 2px; background: #fff; }
.field::placeholder { color: #777; opacity: 1; }
.ro { background: var(--face); color: #888; }
.adv { height: 24px; text-align: left; font-weight: bold; padding-left: 21px; position: relative; flex: none; }
.adv::before { content: ""; position: absolute; left: 4px; top: 7px; border: 5px solid transparent; border-left: 7px solid #333; border-right: 0; }
.params > .last { margin-top: 5px; }
.params .hscroll { margin: auto 0 0 -5px; flex: none; }
.params .thumb { flex: 331; }
.params .track { flex: 32; }
.dlg-split { width: 16px; position: relative; }
.dlg-split i { position: absolute; left: 4px; top: 3px; border: 4px solid transparent; border-right: 4px solid #444; border-left: 0; }
.dlg-help { flex: 1; border: 1px solid var(--line); background: #fff; padding: 8px 0 8px 4px; color: #666; line-height: 13px; }
.dlg-help h3 { font-size: 15px; font-weight: bold; line-height: 18px; margin-bottom: 11px; color: #444; }
.dlg-row { display: flex; gap: 6px; padding: 0 11px; margin-top: 5px; }
.progress-row { margin-top: 25px; }
.progress { flex: 1; height: 22px; line-height: 20px; background: #fff; border: 1px solid #a9a9a9; border-radius: 2px; text-align: center; }
.btn { width: 80px; height: 22px; border: 1px solid #a9a9a9; border-radius: 2px; background: linear-gradient(#fff, #f1f1f1); white-space: nowrap; }
.btn:disabled { color: #999; }
.btn.wide { width: 201px; display: grid; place-content: center; }
.push { margin-left: auto; }

.taskbar { display: flex; height: 41px; background: linear-gradient(90deg, #2e2a22, #3a3b3b 130px, #3b382c 230px, #45221f 350px, #4a2022 700px, #482420 1040px, #3b2820 1120px, #421e1c 1240px, #471c1c 1360px, #35373a 1410px, #3a3a39); color: #fff; }
.taskbar button { width: 49px; display: grid; place-items: center; border-bottom: 3px solid transparent; border-top: 3px solid transparent; }
.taskbar .start { width: 42px; padding-right: 8px; }
.taskbar svg { width: 24px; height: 24px; }
.taskbar .run { background: linear-gradient(#aadcff, #aadcff) center bottom / 40px 3px no-repeat border-box; }
.taskbar .current { background: linear-gradient(#aadcff, #aadcff) center bottom / 48px 3px no-repeat border-box, linear-gradient(#6d5050, #6d5050) border-box; }
.clock { margin-left: auto; padding: 2px 6px 0 0; text-align: center; }
```
